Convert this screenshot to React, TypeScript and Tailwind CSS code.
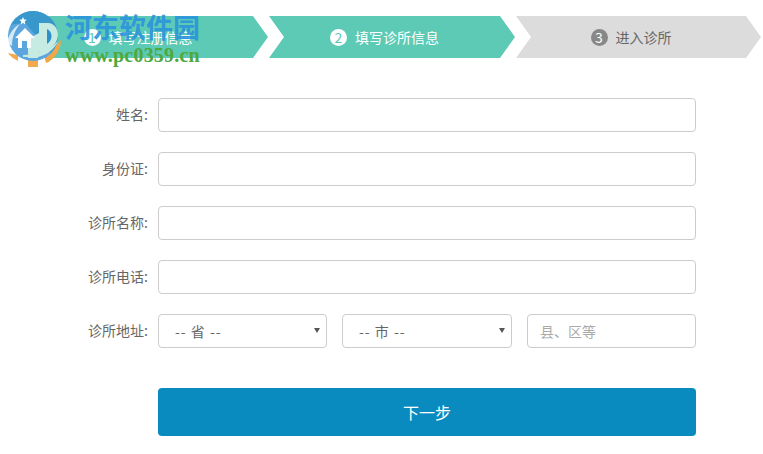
import React from 'react';

const font = "[font-family:'Microsoft_YaHei','Noto_Sans_CJK_SC',sans-serif]";

const steps = [
    { num: '1', label: '填写注册信息', width: 'w-[245px]', bg: 'bg-[#5ccab5]', text: 'text-white', badge: 'bg-white text-[#5ccab5]' },
    { num: '2', label: '填写诊所信息', width: 'w-[246px]', bg: 'bg-[#5ccab5]', text: 'text-white', badge: 'bg-white text-[#5ccab5]' },
    { num: '3', label: '进入诊所', width: 'w-[245px]', bg: 'bg-[#dcdcdc]', text: 'text-[#666]', badge: 'bg-[#888] text-white' },
];

const fields = ['姓名', '身份证', '诊所名称', '诊所电话'];

const inputClass = 'h-[34px] rounded border border-[#ccc] bg-white px-3 text-sm text-[#666] outline-none placeholder:text-[#aaa]';

const Label = ({ text }: { text: string }) => (
    <label className="mb-[2px] w-[148px] shrink-0 text-right text-sm text-[#666]">{text}:</label>
);

const Select = ({ text, width }: { text: string; width: string }) => (
    <div className={`relative ${width}`}>
        <select className={`${inputClass} w-full appearance-none pl-4 tracking-[1px]`}>
            <option>{text}</option>
        </select>
        <span className="absolute right-[7px] top-[14px] h-0 w-0 border-x-[3px] border-t-[5px] border-x-transparent border-t-[#555]"></span>
    </div>
);

const Watermark = () => (
    <div className="absolute left-[5px] top-[11px] z-10 flex">
        <svg width="58" height="57" viewBox="0 0 58 57">
            <path d="M3 42 L13 44 L13 50 C9 48 5 45 3 42 Z" fill="#f3a94f" />
            <path d="M56 29 C56 40 48 50 41 52 L38 40 C46 38 52 35 56 29 Z" fill="#f0a64a" />
            <path d="M23 42 H33 V56 H23 Z" fill="#f3a94f" />
            <circle cx="28" cy="25" r="25" fill="#5ba6de" />
            <path d="M28 0 A25 25 0 0 1 53 25 A25 25 0 0 1 46 42 L22 14 C16 11 10 13 6 14 A25 25 0 0 1 28 0 Z" fill="#3897cb" />
            <path d="M2 32 C4 22 9 16 15 13 C10 19 7 26 7 35 Z" fill="#ffffff" fillOpacity="0.75" />
            <path d="M34 12 H44 C53 14 55 24 51 31 C48 36 42 40 33 42 V47 H23 V28 L34 22 Z" fill="#c5ebe3" />
            <path d="M18 44 C30 44 44 40 53 30 C50 38 42 44 33 46 H18 Z" fill="#c5ebe3" />
            <path d="M42 18 C48 21 48 29 42 33 Z" fill="#2f8fc8" />
            <path d="M10 27 L20 17 L30 27 L26 27 V37 H13 V27 Z" fill="#ffffff" />
            <path d="M17 30 H22 V37 H17 Z" fill="#5ba6de" />
            <path d="M18 6 l1.1 2.6 2.8 .2 -2.2 1.8 .7 2.8 -2.4 -1.5 -2.4 1.5 .7 -2.8 -2.2 -1.8 2.8 -.2 Z" fill="#ffffff" />
        </svg>
        <div className="ml-[2px] flex flex-col">
            <span className={`${font} mt-[-2px] text-[27px] leading-[36px] font-bold text-[#2a92dc]/90`}>河东软件园</span>
            <span className="text-[20px] leading-[20px] font-bold tracking-[0.2px] text-[#4fa83d] [font-family:'Liberation_Serif',serif]">www.pc0359.cn</span>
        </div>
    </div>
);

const App: React.FC = () => {
    return (
        <div className={`${font} relative h-[454px] w-[763px] overflow-hidden bg-white pt-4`}>
            <Watermark />

            {/* Steps */}
            <div className="ml-[23px] flex gap-px">
                {steps.map((step) => (
                    <div
                        key={step.num}
                        className={`${step.width} ${step.bg} ${step.text} flex h-[42px] items-center justify-center gap-2 pr-[15px] text-sm [clip-path:polygon(0_0,calc(100%-15px)_0,100%_50%,calc(100%-15px)_100%,0_100%,15px_50%)]`}
                    >
                        <span className={`${step.badge} flex h-[17px] w-[17px] items-center justify-center rounded-full text-sm`}>{step.num}</span>
                        <span>{step.label}</span>
                    </div>
                ))}
            </div>

            {/* Form */}
            <div className="mt-10 flex flex-col gap-5">
                {fields.map((field) => (
                    <div key={field} className="flex items-center gap-[10px]">
                        <Label text={field} />
                        <input className={`${inputClass} w-[538px]`} />
                    </div>
                ))}
                <div className="flex items-center gap-[10px]">
                    <Label text="诊所地址" />
                    <div className="flex w-[538px] gap-[15px]">
                        <Select text="-- 省 --" width="w-[169px]" />
                        <Select text="-- 市 --" width="w-[170px]" />
                        <input className={`${inputClass} w-[169px]`} placeholder="县、区等" />
                    </div>
                </div>
            </div>

            <button className="mt-10 ml-[158px] h-12 w-[538px] rounded bg-[#0a8bbf] text-base text-white">下一步</button>
        </div>
    );
};

export default App;
